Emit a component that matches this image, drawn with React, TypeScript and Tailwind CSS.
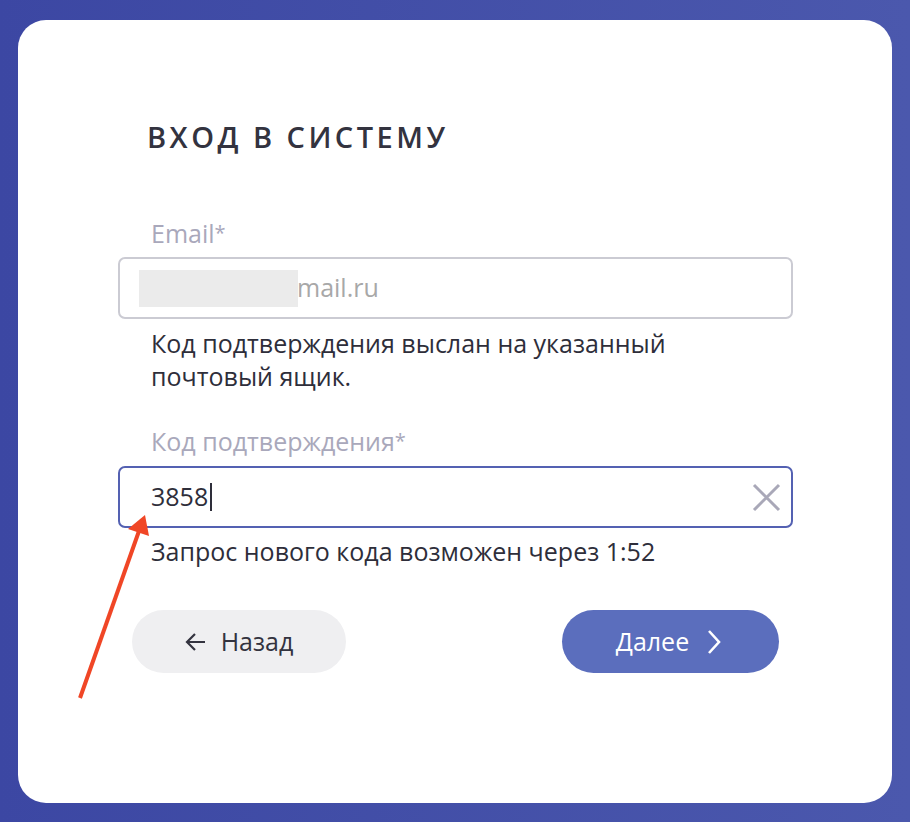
import React from "react";

export default function App() {
  return (
    <div
      className="relative w-[910px] h-[822px] bg-gradient-to-r from-[#3c47a3] to-[#4b58ad] pt-[20px] pl-[18px]"
      style={{ fontFamily: '"Open Sans", "Noto Sans", sans-serif' }}
    >
      <div className="w-[874px] h-[783px] bg-white rounded-[28px] pl-[100px] pt-[97px]">
        <h1 className="pl-[29px] text-[29px] leading-[40px] font-semibold tracking-[0.12em] text-[#33333f]">
          ВХОД В СИСТЕМУ
        </h1>

        <div className="mt-[61px] pl-[33px] text-[25px] leading-[30px] text-[#a9a8bb]">
          Email<span className="text-[20px] align-top">*</span>
        </div>
        <div className="mt-[9px] w-[675px] h-[62px] rounded-[7px] border-2 border-[#cbcbd3] flex items-center pl-[19px]">
          <div className="w-[159px] h-[37px] bg-[#ebebeb]" />
          <span className="-ml-[1px] text-[25px] text-[#a8a8a8]">mail.ru</span>
        </div>

        <p className="mt-[8px] pl-[33px] w-[600px] text-[25px] leading-[33px] text-[#2e2e3a]">
          Код подтверждения выслан на указанный почтовый ящик.
        </p>

        <div className="mt-[33px] pl-[33px] text-[25px] leading-[30px] text-[#a9a8bb]">
          Код подтверждения<span className="text-[20px] align-top">*</span>
        </div>
        <div className="mt-[10px] w-[675px] h-[62px] rounded-[7px] border-2 border-[#5461b2] flex items-center pl-[31px] pr-[10px]">
          <span className="text-[25px] text-[#2e2e3a]">3858</span>
          <span className="ml-[2px] w-[2px] h-[28px] bg-[#2e2e3a]" />
          <svg className="ml-auto" width="29" height="29" viewBox="0 0 29 29">
            <path d="M2 2 L27 27 M27 2 L2 27" stroke="#a9a8b8" strokeWidth="3" />
          </svg>
        </div>

        <p className="mt-[7px] pl-[33px] text-[25px] leading-[33px] text-[#2e2e3a]">
          Запрос нового кода возможен через 1:52
        </p>

        <div className="mt-[42px] flex pl-[14px]">
          <button className="w-[214px] h-[63px] rounded-full bg-[#efeff1] flex items-center justify-center gap-[14px] text-[25px] text-[#33333f]">
            <svg width="22" height="20" viewBox="0 0 22 20">
              <path d="M20 10 H3 M10 2 L2 10 L10 18" stroke="#33333f" strokeWidth="2.2" fill="none" />
            </svg>
            <span>Назад</span>
          </button>
          <button className="ml-[216px] w-[217px] h-[63px] rounded-full bg-[#5b6ebd] flex items-center justify-center gap-[18px] pr-[4px] text-[25px] text-white">
            <span>Далее</span>
            <svg width="14" height="26" viewBox="0 0 14 26">
              <path d="M2 2 L12 13 L2 24" stroke="#ffffff" strokeWidth="2.6" fill="none" />
            </svg>
          </button>
        </div>
      </div>

      <svg className="absolute left-0 top-0 pointer-events-none" width="910" height="822" viewBox="0 0 910 822">
        <line x1="80" y1="698" x2="139" y2="531" stroke="#f04626" strokeWidth="4" />
        <polygon points="145,515 149,536 128,529" fill="#f04626" />
      </svg>
    </div>
  );
}
